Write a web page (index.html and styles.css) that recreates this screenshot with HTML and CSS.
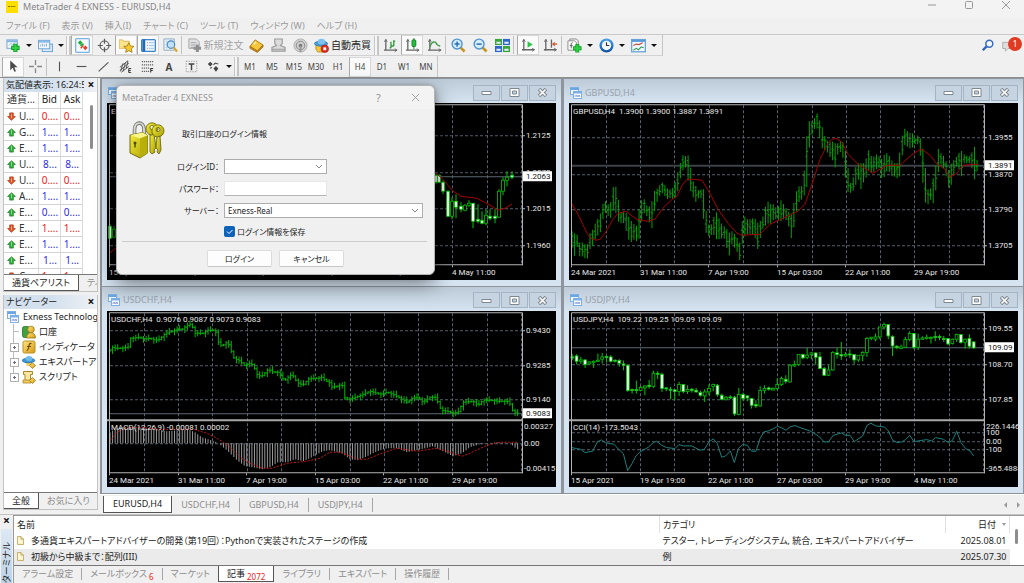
FILE: index.html
```html
<!DOCTYPE html>
<html lang="ja">
<head>
<meta charset="utf-8">
<title>MetaTrader 4 EXNESS - EURUSD,H4</title>
<link rel="stylesheet" href="styles.css">
</head>
<body>
<svg class="defs" aria-hidden="true">
  <defs>
    <linearGradient id="gold" x1="0" y1="0" x2="1" y2="1"><stop offset="0" stop-color="#ffe680"/><stop offset="1" stop-color="#d79a12"/></linearGradient>
    <linearGradient id="blue" x1="0" y1="0" x2="0" y2="1"><stop offset="0" stop-color="#4ba3ea"/><stop offset="1" stop-color="#0c4f9c"/></linearGradient>
    <linearGradient id="lock" x1="0" y1="0" x2="1" y2="1"><stop offset="0" stop-color="#f6ee3a"/><stop offset="1" stop-color="#a79d06"/></linearGradient>
    <symbol id="i-newchart" viewBox="0 0 16 16"><rect x="1" y="2" width="11" height="9" fill="#f4faff" stroke="#6fa3d0"/><path d="M1 3.500h11" stroke="#7fb2dd" stroke-width="2"/><path d="M3 8l2-2 2 1 3-2" fill="none" stroke="#8fb4cc"/><path d="M10 6v9M5.500 10.500h9" stroke="#0f9a24" stroke-width="4.400"/><path d="M10 6.700v7.600M6.200 10.500h7.600" stroke="#2fd045" stroke-width="2.600"/></symbol>
    <symbol id="i-profiles" viewBox="0 0 16 16"><rect x="4.500" y="6.500" width="11" height="8" fill="#dbeafa" stroke="#6a9fd6"/><rect x=".5" y="2.500" width="12" height="9" fill="#f0f7ff" stroke="#6a9fd6"/><path d="M1 4h11" stroke="#8bbbe8" stroke-width="2"/><path d="M3 9V7M5 9V6M7 9V7M9 9V6" stroke="#8aa9c6"/></symbol>
    <symbol id="i-watch" viewBox="0 0 16 16"><rect x=".7" y=".7" width="14.600" height="14.600" rx="1" fill="#f5faff" stroke="#7db3e4" stroke-width="1.400"/><path d="M3 5l2.500-2.500L8 5 5.500 7.500z" fill="#25a93a"/><path d="M8.500 10.500L11 8l2.500 2.500L11 13z" fill="#e0442a"/><path d="M6 8.500l3-2.500" stroke="#25a93a" stroke-width="2"/><path d="M6 11l3-3" stroke="#e0442a" stroke-width="1.500"/></symbol>
    <symbol id="i-target" viewBox="0 0 16 16"><circle cx="8" cy="8" r="4.800" fill="none" stroke="#5b5b5b" stroke-width="1.300"/><path d="M8 .8v5.400M8 9.800v5.400M.8 8h5.400M9.800 8h5.400" stroke="#5b5b5b" stroke-width="1.300"/></symbol>
    <symbol id="i-star" viewBox="0 0 16 16"><path d="M0 2h4l1 1.500h6V11H0z" fill="#fbe38b" stroke="#d2a93a" stroke-width=".8"/><path d="M10.500 5l1.700 3.500 3.700.5-2.700 2.600.7 3.700-3.400-1.800-3.300 1.800.6-3.700L5 9l3.800-.5z" fill="#f8c92e" stroke="#9c7b17" stroke-width=".9"/></symbol>
    <symbol id="i-nav" viewBox="0 0 16 16"><rect x=".7" y="1.700" width="14.600" height="12.600" rx="1" fill="#eef6fe" stroke="#3f84c6" stroke-width="1.400"/><path d="M3 1.500v13" stroke="#1e6bb8" stroke-width="3"/><path d="M6.500 5h.8M6.500 8h.8M6.500 11h.8" stroke="#e05a4a"/><path d="M8.500 5H14M8.500 8H14M8.500 11H14" stroke="#9cc3e8"/></symbol>
    <symbol id="i-tester" viewBox="0 0 16 16"><path d="M1 1h11v12H1z" fill="#f2f7fc" stroke="#8aa6c0"/><path d="M2 4h9M2 7h9M2 10h9M4 1v12M7 1v12" stroke="#c4d5e6"/><circle cx="8.500" cy="7" r="4" fill="#bfe0f8" stroke="#4a88c0" stroke-width="1.200"/><path d="M11.500 10l3.500 4.500" stroke="#d9a520" stroke-width="2.400"/></symbol>
    <symbol id="i-order" viewBox="0 0 16 16"><path d="M2 1h8l3 3v7H2z" fill="#e2e2e2" stroke="#a3a3a3"/><path d="M4 5h6M4 7.500h5M4 10h3" stroke="#a0a0a0"/><path d="M11 7v8M7 11h8" stroke="#8e8e8e" stroke-width="3.200"/></symbol>
    <symbol id="i-book" viewBox="0 0 16 16"><path d="M1 9l5.500-7L15 7.500 9 14z" fill="#f3c63c" stroke="#a87b13"/><path d="M1 9v2l8 4.500 6-6V7.500L9 14z" fill="#d08c1a" stroke="#93630f" stroke-width=".7"/><path d="M5 7l2.500-3" stroke="#fff0b0" stroke-width="1.500"/></symbol>
    <symbol id="i-stamp" viewBox="0 0 16 16"><path d="M4 1h8v5l-2 2 5 2v4H1v-4l5-2-2-2z" fill="#dcdcdc" stroke="#9a9a9a" stroke-width="1.200"/><path d="M1 12h14" stroke="#9a9a9a"/></symbol>
    <symbol id="i-signal" viewBox="0 0 16 16"><circle cx="8" cy="8" r="7" fill="#d0d0d0" stroke="#b0b0b0"/><circle cx="8" cy="8" r="4.500" fill="none" stroke="#8a8a8a"/><circle cx="8" cy="8" r="2" fill="#777"/><path d="M8 8v7" stroke="#999" stroke-width="2"/></symbol>
    <symbol id="i-expert" viewBox="0 0 16 16"><path d="M2 8h9l2 4-3 3H4l-2-3z" fill="#f1c63b" stroke="#b3861c" stroke-width=".8"/><ellipse cx="7.500" cy="6" rx="7" ry="2.700" fill="#4a9fd8" stroke="#2b74a8" stroke-width=".8"/><ellipse cx="8" cy="3.800" rx="4" ry="3" fill="#7cc2ec"/><circle cx="11.500" cy="11.500" r="4" fill="#e02a1e" stroke="#a8150e" stroke-width=".7"/><rect x="10" y="10" width="3" height="3" fill="#fff"/></symbol>
    <symbol id="i-bars" viewBox="0 0 16 16"><path d="M3 1.500v12M1 13h14" stroke="#666" stroke-width="1.400"/><path d="M1.500 4L3 1.500 4.500 4M12.500 11.500L15 13l-2.500 1.500" fill="none" stroke="#666"/><path d="M8.500 4v7M7 10.500h1.500M11.500 2.500v6M11.500 3.500H13M8.500 8.500h3" stroke="#2b9a3a" stroke-width="1.400"/></symbol>
    <symbol id="i-candle" viewBox="0 0 16 16"><path d="M3 1.500v12M1 13h14" stroke="#666" stroke-width="1.400"/><path d="M1.500 4L3 1.500 4.500 4M12.500 11.500L15 13l-2.500 1.500" fill="none" stroke="#666"/><path d="M9.500 0v12" stroke="#14882a"/><rect x="7.500" y="2" width="4" height="7" rx="1" fill="#22c23c" stroke="#0d7a20"/></symbol>
    <symbol id="i-line" viewBox="0 0 16 16"><path d="M3 1.500v12M1 13h14" stroke="#666" stroke-width="1.400"/><path d="M1.500 4L3 1.500 4.500 4M12.500 11.500L15 13l-2.500 1.500" fill="none" stroke="#666"/><path d="M3 10c2-7 6-7 7-4 1 2 3 2 4 3" fill="none" stroke="#3fa04c" stroke-width="1.500"/></symbol>
    <symbol id="i-zoomin" viewBox="0 0 16 16"><path d="M10 10l4.500 4.500" stroke="#c9951d" stroke-width="3"/><circle cx="6.500" cy="6.500" r="5.300" fill="#d5ecfb" stroke="#4f95cf" stroke-width="1.500"/><path d="M6.500 3.800v5.400M3.800 6.500h5.400" stroke="#2a6fb0" stroke-width="1.600"/></symbol>
    <symbol id="i-zoomout" viewBox="0 0 16 16"><path d="M10 10l4.500 4.500" stroke="#c9951d" stroke-width="3"/><circle cx="6.500" cy="6.500" r="5.300" fill="#d5ecfb" stroke="#4f95cf" stroke-width="1.500"/><path d="M3.800 6.500h5.400" stroke="#2a6fb0" stroke-width="1.600"/></symbol>
    <symbol id="i-tile" viewBox="0 0 16 16"><rect x="0" y="1" width="7.500" height="6.500" fill="#39a53c"/><rect x="8.500" y="1" width="7.500" height="6.500" fill="#2f66c8"/><rect x="0" y="8.500" width="7.500" height="6.500" fill="#2f66c8"/><rect x="8.500" y="8.500" width="7.500" height="6.500" fill="#39a53c"/><path d="M1.500 4h4.500v2H1.500zM10 4h4.500v2H10zM1.500 11.500h4.500v2H1.500zM10 11.500h4.500v2H10z" fill="#e6f1fb"/></symbol>
    <symbol id="i-scroll" viewBox="0 0 16 16"><path d="M3 1.500v12M1 12.500h13" stroke="#666" stroke-width="1.400"/><path d="M1.500 4L3 1.500 4.500 4M12 11l2.500 1.500L12 14" fill="none" stroke="#666"/><path d="M7 3.500l5.500 3.500L7 10.500z" fill="#2fc14a"/></symbol>
    <symbol id="i-shift" viewBox="0 0 16 16"><path d="M3 1.500v12M1 12.500h13M9 1.500v9" stroke="#666" stroke-width="1.400"/><path d="M1.500 4L3 1.500 4.500 4M12 11l2.500 1.500L12 14" fill="none" stroke="#666"/><path d="M9.500 6.500l3-2.500v5z" fill="#d4552d"/><path d="M12 6.500h3" stroke="#d4552d" stroke-width="1.500"/></symbol>
    <symbol id="i-addind" viewBox="0 0 16 16"><path d="M3 3V1h7l2 2v9" fill="#f0f0f0" stroke="#8a8a8a"/><path d="M1 3h7l2 2v8H1z" fill="#fff" stroke="#8a8a8a"/><path d="M6 5C4 5 4.500 7 4.500 8v3M3 8h3" fill="none" stroke="#555"/><path d="M11 6.500v9M6.500 11h9" stroke="#0f9a24" stroke-width="4.200"/><path d="M11 7.200v7.600M7.200 11h7.600" stroke="#2fd045" stroke-width="2.400"/></symbol>
    <symbol id="i-clock" viewBox="0 0 16 16"><circle cx="8" cy="8" r="7.500" fill="url(#blue)"/><circle cx="8" cy="8" r="5" fill="#f3f9ff"/><path d="M8 4.500V8h3" fill="none" stroke="#333" stroke-width="1.200"/></symbol>
    <symbol id="i-template" viewBox="0 0 16 16"><rect x=".7" y="1.700" width="14.600" height="13" fill="#f2f8fe" stroke="#6aa5da" stroke-width="1.400"/><path d="M1 3h14" stroke="#5a9bd6" stroke-width="2.400"/><path d="M2.500 8l3-1.500 3 .5 4-2" fill="none" stroke="#c44a3c" stroke-width="1.200"/><path d="M2.500 13l3-2 2.500 1.500 3-3 2.500 1" fill="none" stroke="#3a9a5a" stroke-width="1.200"/></symbol>
    <symbol id="i-arrow" viewBox="0 0 16 16"><path d="M4 .5v12l3-3 2 5 2-.8-2-4.700h4z" fill="#4a4a4a"/></symbol>
    <symbol id="i-cross" viewBox="0 0 16 16"><path d="M8 0v6M8 10v6M0 8h6M10 8h6" stroke="#888" stroke-width="1.600"/></symbol>
    <symbol id="i-vline" viewBox="0 0 16 16"><path d="M8 2v12" stroke="#555" stroke-width="1.400"/></symbol>
    <symbol id="i-hline" viewBox="0 0 16 16"><path d="M2 8h12" stroke="#555" stroke-width="1.400"/></symbol>
    <symbol id="i-trend" viewBox="0 0 16 16"><path d="M2 14L14 3" stroke="#555" stroke-width="1.400"/></symbol>
    <symbol id="i-channel" viewBox="0 0 16 16"><path d="M1 9L11 1M1 13L12 4M3 15l9-7M5 4l-3 10M8 3L5 14M11 1L9 10" stroke="#555" stroke-width="1.200"/><path d="M15 10.500h-3v5h3M12 13h2.500" fill="none" stroke="#333" stroke-width="1.200"/></symbol>
    <symbol id="i-fibo" viewBox="0 0 16 16"><path d="M1 2h14M1 6h14M1 10h9M1 14h9" stroke="#666" stroke-width="1.300" stroke-dasharray="1.500 1"/><path d="M12 15.500v-5h3M12 13h2.500" fill="none" stroke="#333" stroke-width="1.300"/></symbol>
    <symbol id="i-label" viewBox="0 0 16 16"><rect x="1.500" y="1.500" width="13" height="13" fill="none" stroke="#888" stroke-dasharray="1.500 1.500"/><path d="M4.500 5h7M8 5v7.500" stroke="#444" stroke-width="1.800"/></symbol>
    <symbol id="i-marks" viewBox="0 0 16 16"><path d="M1 5l3-3 3 3-3 3zM8 10.500l3-3 3 3-3 4z" fill="#444"/><path d="M6 9l-2 1.500M8 6l2-2 4 1" stroke="#555" stroke-width="1.400" fill="none"/></symbol>
    <symbol id="i-chartwin" viewBox="0 0 12 12"><rect x=".5" y=".5" width="8" height="7" fill="#eef6ff" stroke="#7db0e4"/><path d="M.5 2h8" stroke="#6ba6e0" stroke-width="2"/><rect x="3.500" y="4.500" width="8" height="7" fill="#f8fbff" stroke="#7db0e4"/><path d="M3.500 5.500h8" stroke="#7db0e4" stroke-width="2"/><path d="M5 10V8.500l1.500 1V8l1.500 2V8l1.500 2V8" fill="none" stroke="#8b9dd8" stroke-width=".8"/></symbol>
    <symbol id="i-up" viewBox="0 0 10 10"><path d="M5 .7L9.300 5H7v4H3V5H.7z" fill="#2fae3a" stroke="#1b7d28" stroke-width=".8"/><path d="M5 2v5" stroke="#8be08f"/></symbol>
    <symbol id="i-down" viewBox="0 0 10 10"><path d="M5 9.300L.7 5H3V1h4v4h2.300z" fill="#e0572d" stroke="#a83414" stroke-width=".8"/><path d="M5 2.500v4" stroke="#ffb08c"/></symbol>
    <symbol id="i-doc" viewBox="0 0 8 10"><path d="M.5.5h4l3 3v6h-7z" fill="#fff6d2" stroke="#b59a4c" stroke-width=".9"/><path d="M4.500.5v3h3" fill="none" stroke="#b59a4c" stroke-width=".9"/></symbol>
    <symbol id="i-account" viewBox="0 0 14 14"><rect x=".5" y="1.500" width="7" height="11" rx="2" fill="#3fa13f" stroke="#1f6f24" stroke-width=".8"/><circle cx="9" cy="4.500" r="3.300" fill="url(#gold)" stroke="#9b7412" stroke-width=".8"/><path d="M4.500 13c0-7 9-7 9 0z" fill="url(#gold)" stroke="#9b7412" stroke-width=".8"/></symbol>
    <symbol id="i-func" viewBox="0 0 14 14"><rect x="1" y="1" width="12" height="12" rx="1.500" fill="url(#gold)" stroke="#b98f2a"/><path d="M9.500 3.500C7 2.500 7 6 6.500 8s-.7 3-2 2.700M5 6.500h4" fill="none" stroke="#6d4c0b" stroke-width="1.100"/></symbol>
    <symbol id="i-hat" viewBox="0 0 14 14"><path d="M3 6h7v5H5z" fill="#f2cf62"/><ellipse cx="6.500" cy="5.500" rx="6.300" ry="2.300" fill="#3f97d2" stroke="#2368a0" stroke-width=".7"/><ellipse cx="7" cy="3.500" rx="3.400" ry="2.600" fill="#6db9e8"/><path d="M10.500 8l3 2.500-3 3-3-3z" fill="url(#gold)" stroke="#93700f" stroke-width=".7"/></symbol>
    <symbol id="i-script" viewBox="0 0 14 14"><path d="M1.500 1.500h9v3h-2v6H3v-6H1.500z" fill="#fbe7a0" stroke="#a9852a"/><path d="M1 10h8v3H1z" fill="#f0cc5c" stroke="#a9852a" stroke-width=".8"/><path d="M10.500 7.500l3 3-3 3-3-3z" fill="url(#gold)" stroke="#93700f" stroke-width=".7"/></symbol>
  </defs>
</svg>

<header class="titlebar">
  <svg class="logo" viewBox="0 0 12 12"><path fill="#ffde02" d="M0 0h12v12H0z"/><path stroke="#8a7700" d="M2 5.500h8" stroke-dasharray="2 .6"/></svg>
  <h1 class="titlebar-text">MetaTrader 4 EXNESS - EURUSD,H4</h1>
  <div class="sysbuttons">
    <button aria-label="最小化"><svg viewBox="0 0 10 10"><path d="M1 5h8"/></svg></button>
    <button aria-label="最大化"><svg viewBox="0 0 10 10"><rect x="1.500" y="1.500" width="7" height="7" rx="1"/></svg></button>
    <button aria-label="閉じる"><svg viewBox="0 0 10 10"><path d="M1 1l8 8M9 1L1 9"/></svg></button>
  </div>
</header>

<nav class="menubar">
  <button>ファイル (F)</button><button>表示 (V)</button><button>挿入(I)</button><button>チャート (C)</button><button>ツール (T)</button><button>ウィンドウ (W)</button><button>ヘルプ (H)</button>
</nav>

<div class="toolrow">
  <div class="toolbar">
    <button class="tool" aria-label="新規チャート"><svg><use href="#i-newchart"/></svg></button><button class="caret" aria-label="メニュー"></button>
    <button class="tool" aria-label="組表示"><svg><use href="#i-profiles"/></svg></button><button class="caret" aria-label="メニュー"></button>
    <span class="grip"></span>
    <button class="tool on" aria-label="気配値表示"><svg><use href="#i-watch"/></svg></button>
    <button class="tool" aria-label="データウィンドウ"><svg><use href="#i-target"/></svg></button>
    <button class="tool on" aria-label="ナビゲーター"><svg><use href="#i-star"/></svg></button>
    <button class="tool on" aria-label="ターミナル"><svg><use href="#i-nav"/></svg></button>
    <button class="tool" aria-label="テスター"><svg><use href="#i-tester"/></svg></button>
    <span class="sep"></span>
    <button class="tool wide off"><svg><use href="#i-order"/></svg>新規注文</button>
    <button class="tool" aria-label="MetaEditor"><svg><use href="#i-book"/></svg></button>
    <button class="tool" aria-label="印刷"><svg><use href="#i-stamp"/></svg></button>
    <button class="tool" aria-label="シグナル"><svg><use href="#i-signal"/></svg></button>
    <button class="tool wide"><svg><use href="#i-expert"/></svg>自動売買</button>
    <span class="grip"></span>
    <button class="tool" aria-label="バーチャート"><svg><use href="#i-bars"/></svg></button>
    <button class="tool on" aria-label="ローソク足"><svg><use href="#i-candle"/></svg></button>
    <button class="tool" aria-label="ラインチャート"><svg><use href="#i-line"/></svg></button>
    <span class="sep thin"></span>
    <button class="tool" aria-label="拡大"><svg><use href="#i-zoomin"/></svg></button>
    <button class="tool" aria-label="縮小"><svg><use href="#i-zoomout"/></svg></button>
    <button class="tool" aria-label="整列"><svg><use href="#i-tile"/></svg></button>
    <span class="sep"></span>
    <button class="tool on" aria-label="自動スクロール"><svg><use href="#i-scroll"/></svg></button>
    <button class="tool" aria-label="シフト"><svg><use href="#i-shift"/></svg></button>
    <span class="sep thin"></span>
    <button class="tool" aria-label="インディケータ"><svg><use href="#i-addind"/></svg></button><button class="caret" aria-label="メニュー"></button>
    <button class="tool" aria-label="時間足"><svg><use href="#i-clock"/></svg></button><button class="caret" aria-label="メニュー"></button>
    <button class="tool" aria-label="定型チャート"><svg><use href="#i-template"/></svg></button><button class="caret" aria-label="メニュー"></button>
  </div>
  <div class="toolrow-right">
    <button class="tool" aria-label="検索"><svg viewBox="0 0 16 16"><path d="M7 9l-5 5" stroke="#2f62b8" stroke-width="2.600"/><circle cx="9.500" cy="6.500" r="4" fill="#f4f8ff" stroke="#3a6cc0" stroke-width="1.700"/></svg></button>
    <button class="tool notify" aria-label="通知"><svg viewBox="0 0 16 16"><path d="M2 5h11v7H8l-3 3v-3H2z" fill="#dedede" stroke="#a8a8a8"/></svg><span class="badge">1</span></button>
  </div>
</div>

<div class="toolrow second">
  <div class="toolbar">
    <button class="tool on" aria-label="カーソル"><svg><use href="#i-arrow"/></svg></button>
    <button class="tool" aria-label="十字カーソル"><svg><use href="#i-cross"/></svg></button>
    <span class="sep thin"></span>
    <button class="tool" aria-label="垂直線"><svg><use href="#i-vline"/></svg></button>
    <button class="tool" aria-label="水平線"><svg><use href="#i-hline"/></svg></button>
    <button class="tool" aria-label="トレンドライン"><svg><use href="#i-trend"/></svg></button>
    <button class="tool" aria-label="チャネル"><svg><use href="#i-channel"/></svg></button>
    <button class="tool" aria-label="フィボナッチ"><svg><use href="#i-fibo"/></svg></button>
    <button class="tool letter">A</button>
    <button class="tool" aria-label="ラベル"><svg><use href="#i-label"/></svg></button>
    <button class="tool" aria-label="矢印"><svg><use href="#i-marks"/></svg></button><button class="caret" aria-label="メニュー"></button>
    <span class="grip"></span>
    <button class="tool tf">M1</button><button class="tool tf">M5</button><button class="tool tf">M15</button><button class="tool tf">M30</button><button class="tool tf">H1</button><button class="tool tf on">H4</button><button class="tool tf">D1</button><button class="tool tf">W1</button><button class="tool tf">MN</button>
  </div>
</div>

<main class="workspace">
  <aside class="side">
    <section class="panel watch">
      <header class="panel-head"><h2>気配値表示: 16:24:57</h2><button aria-label="閉じる">×</button></header>
      <div class="panel-body watch-body">
        <table class="quotes">
          <thead><tr><th class="sym">通貨...</th><th>Bid</th><th>Ask</th></tr></thead>
          <tbody>
            <tr class="down"><td><svg><use href="#i-down"/></svg>U...</td><td>0....</td><td>0....</td></tr>
            <tr><td><svg><use href="#i-up"/></svg>G...</td><td>1....</td><td>1....</td></tr>
            <tr><td><svg><use href="#i-up"/></svg>E...</td><td>1....</td><td>1....</td></tr>
            <tr><td><svg><use href="#i-up"/></svg>U...</td><td>8...</td><td>8...</td></tr>
            <tr class="down"><td><svg><use href="#i-down"/></svg>U...</td><td>0....</td><td>0....</td></tr>
            <tr><td><svg><use href="#i-up"/></svg>A...</td><td>1....</td><td>1....</td></tr>
            <tr><td><svg><use href="#i-up"/></svg>E...</td><td>0....</td><td>0....</td></tr>
            <tr class="down"><td><svg><use href="#i-down"/></svg>E...</td><td>1....</td><td>1....</td></tr>
            <tr><td><svg><use href="#i-up"/></svg>E...</td><td>1....</td><td>1....</td></tr>
            <tr><td><svg><use href="#i-up"/></svg>E...</td><td>1...</td><td>1...</td></tr>
            <tr class="down"><td><svg><use href="#i-down"/></svg>C...</td><td>1....</td><td>1....</td></tr>
          </tbody>
        </table>
        <div class="scroll"><span></span></div>
      </div>
      <div class="tabs"><button class="tab active">通貨ペアリスト</button><button class="tab">ティックチャート</button></div>
    </section>
    <section class="panel nav">
      <header class="panel-head"><h2>ナビゲーター</h2><button aria-label="閉じる">×</button></header>
      <ul class="panel-body tree">
        <li class="root"><svg><use href="#i-chartwin"/></svg>Exness Technologies</li>
        <li><i class="branch"></i><svg><use href="#i-account"/></svg>口座</li>
        <li><i class="branch plus"></i><svg><use href="#i-func"/></svg>インディケータ</li>
        <li><i class="branch plus"></i><svg><use href="#i-hat"/></svg>エキスパートアドバイザ</li>
        <li><i class="branch plus last"></i><svg><use href="#i-script"/></svg>スクリプト</li>
      </ul>
      <div class="tabs"><button class="tab active">全般</button><button class="tab">お気に入り</button></div>
    </section>
  </aside>

  <div class="mdi">
    <div class="windows">
      <section class="win">
        <header class="win-head"><svg class="win-icon"><use href="#i-chartwin"/></svg><h2>EURUSD,H4</h2><div class="win-buttons"></div></header>
        <svg class="chart" data-chart="eurusd" viewBox="0 0 449 176"></svg>
      </section>
      <section class="win">
        <header class="win-head"><svg class="win-icon"><use href="#i-chartwin"/></svg><h2>GBPUSD,H4</h2><div class="win-buttons"></div></header>
        <svg class="chart" data-chart="gbpusd" viewBox="0 0 449 176"></svg>
      </section>
      <section class="win">
        <header class="win-head"><svg class="win-icon"><use href="#i-chartwin"/></svg><h2>USDCHF,H4</h2><div class="win-buttons"></div></header>
        <svg class="chart" data-chart="usdchf" viewBox="0 0 449 176"></svg>
      </section>
      <section class="win">
        <header class="win-head"><svg class="win-icon"><use href="#i-chartwin"/></svg><h2>USDJPY,H4</h2><div class="win-buttons"></div></header>
        <svg class="chart" data-chart="usdjpy" viewBox="0 0 449 176"></svg>
      </section>
    </div>
    <div class="chart-tabs">
      <button class="active">EURUSD,H4</button><button>USDCHF,H4</button><button>GBPUSD,H4</button><button>USDJPY,H4</button>
      <div class="chart-arrows"><button class="prev" aria-label="前へ"></button><button class="next" aria-label="次へ"></button></div>
    </div>
  </div>
</main>

<section class="terminal">
  <div class="term-side"><button aria-label="閉じる">×</button><h2>ターミナル</h2></div>
  <div class="term-main">
    <div class="term-body">
      <table class="articles">
        <thead><tr><th>名前</th><th class="cat">カテゴリ</th><th class="date">日付<span class="sort"></span></th></tr></thead>
        <tbody>
          <tr><td><svg><use href="#i-doc"/></svg>多通貨エキスパートアドバイザーの開発（第19回）：Pythonで実装されたステージの作成</td><td>テスター, トレーディングシステム, 統合, エキスパートアドバイザー</td><td class="date">2025.08.01</td></tr>
          <tr class="alt"><td><svg><use href="#i-doc"/></svg>初級から中級まで：配列(III)</td><td>例</td><td class="date">2025.07.30</td></tr>
        </tbody>
      </table>
      <div class="term-scroll"><span></span></div>
    </div>
    <div class="term-tabs">
      <button>アラーム設定</button><button>メールボックス<sub>6</sub></button><button class="last">マーケット</button><button class="active">記事<sub>2072</sub></button><button>ライブラリ</button><button>エキスパート</button><button>操作履歴</button>
    </div>
  </div>
</section>

<form class="dialog" role="dialog" aria-labelledby="dlg-title">
  <header class="dialog-head"><h2 id="dlg-title">MetaTrader 4 EXNESS</h2><button type="button" aria-label="ヘルプ">?</button><button type="button" aria-label="閉じる"><svg viewBox="0 0 10 10"><path d="M1 1l8 8M9 1L1 9"/></svg></button></header>
  <div class="dialog-body">
    <svg class="keys" viewBox="0 0 36 38" aria-hidden="true">
      <g fill="url(#lock)" stroke="#6f6a10" stroke-width=".9">
        <path d="M21 14l4-1 2 14-2 2 1 2-3 2-2-2z"/>
        <path fill-rule="evenodd" d="M17 7a6 6 0 1 1 9 6l-4 1a6 6 0 0 1-5-7zm4 0a2 2 0 1 0 4-1 2 2 0 0 0-4 1z"/>
        <path d="M28 15l3 0 1 14-2 4-2-2 1-2-2-2z"/>
        <path fill-rule="evenodd" d="M23 9a6 6 0 1 1 9 6l-4 1a6 6 0 0 1-5-7zm4 0a2 2 0 1 0 4-1 2 2 0 0 0-4 1z"/>
      </g>
      <path d="M5.500 15V9c0-9 9-9 9.500-1v7" fill="none" stroke="#6e6e66" stroke-width="3.600"/>
      <path d="M5.500 15V9c0-9 9-9 9.500-1v7" fill="none" stroke="#d8d8d2" stroke-width="1.900"/>
      <path d="M1 14l13-2.500 4.500 3V32L11 37 1 32z" fill="url(#lock)" stroke="#6f6a10"/>
      <path d="M1 14l10 3.500L18.500 14.500 14 11.500z" fill="#f9f58a"/>
      <path d="M11 17.500V37l7.500-5V14.500z" fill="#b9af0c"/>
      <path d="M2.500 20l7 2M2.500 29l7 3" stroke="#d3ca22"/>
      <circle cx="6" cy="22" r="1.500" fill="#4d4906"/><path d="M6 22v4.500" stroke="#4d4906" stroke-width="1.400"/>
    </svg>
    <p class="lead">取引口座のログイン情報</p>
    <label for="login">ログインID：</label>
    <select id="login" class="field"><option></option></select>
    <label for="password">パスワード：</label>
    <input id="password" class="field" type="password">
    <label for="server">サーバー：</label>
    <select id="server" class="field long"><option>Exness-Real</option></select>
    <div class="save"><input id="save" type="checkbox" checked><label for="save">ログイン情報を保存</label></div>
  </div>
  <footer class="dialog-foot"><button type="button">ログイン</button><button type="button">キャンセル</button></footer>
</form>
<script src="charts.js"></script>
</body>
</html>
```

FILE: styles.css
```css
* { box-sizing: border-box; }
body {
  margin: 0;
  height: 100vh;
  display: flex;
  flex-direction: column;
  overflow: hidden;
  background: #f0f0f0;
  color: #222;
  font: 9px/14px "Noto Sans", "Noto Sans CJK JP", sans-serif;
  font-feature-settings: "palt";
  white-space: nowrap;
}
h1, h2, p, ul { margin: 0; padding: 0; font: inherit; list-style: none; }
button { margin: 0; padding: 0; border: 0; background: none; color: inherit; font: inherit; font-feature-settings: inherit; white-space: nowrap; }
.defs { position: absolute; width: 0; height: 0; }

.titlebar { display: flex; align-items: center; gap: 5px; height: 18px; padding: 0 0 5px 6px; background: #f3f3f3; color: #858585; }
.logo { width: 12px; height: 12px; }
.sysbuttons { margin-left: auto; display: flex; }
.sysbuttons button { width: 37px; height: 14px; }
.sysbuttons svg { width: 10px; height: 10px; fill: none; stroke: #999; }

.menubar { display: flex; gap: 12px; height: 17px; padding: 1px 6px; color: #9a9a9a; border-bottom: 1px solid #c9c9c9; }

.toolrow { display: flex; justify-content: space-between; height: 21px; background: #f0f0f0; }
.toolbar { display: flex; align-items: center; padding: 0 3px 0 2px; border-right: 1px solid #c6c6c6; border-bottom: 1px solid #d2d2d2; }
.toolrow.second { height: 22px; border-bottom: 1px solid #8f8f8f; }
.second .toolbar { padding: 0 0 0 2px; border-bottom: 0; }
.tool { display: flex; align-items: center; justify-content: center; width: 22px; height: 20px; }
.tool svg { width: 15px; height: 15px; flex: none; }
.second .tool svg { width: 13px; height: 13px; }
.tool.on { background: #fafafa; border: 1px solid #d8d8d8; border-left-color: #aaa; }
.tool.wide { width: 63px; gap: 2px; font-size: 10px; }
.tool.off { width: 60px; color: #a4a4a4; }
.tool.tf { font-size: 8px; color: #444; }
.tool.letter { font-size: 10px; font-weight: 700; color: #444; }
.caret { width: 10px; height: 20px; display: flex; align-items: center; justify-content: center; }
.caret::before { content: ""; border: 3px solid transparent; border-top-color: #111; border-bottom: 0; }
.grip { width: 5px; height: 19px; border: solid #c6c6c6; border-width: 0 2px 0 1px; background: #f6f6f6; }
.sep { width: 4px; height: 18px; border-left: 1px solid #c2c2c2; }
.sep.thin { width: 2px; }
.toolrow-right { display: flex; gap: 2px; padding-right: 1px; }
.toolrow-right .tool svg { width: 14px; height: 14px; }
.toolrow-right .notify { position: relative; justify-content: flex-start; }
.badge { position: absolute; right: 1px; top: 2px; width: 14px; height: 14px; border-radius: 50%; background: #e03a22; color: #fff; line-height: 14px; text-align: center; }

.workspace { flex: 1; display: flex; min-height: 0; }
.side { width: 100px; display: flex; flex-direction: column; padding: 0 2px 4px 3px; gap: 3px; }
.panel { display: flex; flex-direction: column; min-height: 0; border: 1px solid #c2c2c2; border-top: 0; }
.watch { flex: 0 0 214px; }
.nav { flex: 1; }
.panel-head { display: flex; justify-content: space-between; height: 14px; padding-right: 2px; background: linear-gradient(90deg, #d3e0ee 50%, #eef1f5); line-height: 13px; }
.panel-head h2 { width: 80px; padding-left: 2px; overflow: hidden; }
.panel-head button, .term-side button { width: 8px; font-weight: 700; font-size: 12px; line-height: 12px; color: #111; }
.panel-body { flex: 1; min-height: 0; background: #fff; overflow: hidden; }
.watch-body { display: flex; justify-content: space-between; }
.quotes { border-collapse: collapse; table-layout: fixed; width: 79px; height: 0; font-size: 10px; }
.quotes th, .quotes td { height: 16px; padding: 0 3px; border-right: 1px solid #dadada; border-bottom: 1px solid #d2d2d2; line-height: 15px; font-weight: 400; text-align: right; overflow: hidden; }
.quotes th { width: 22px; }
.quotes .sym { width: 34px; }
.quotes th.sym, .quotes td:first-child, .quotes .down td:first-child { text-align: left; color: #333; }
.quotes td { color: #2a2af0; }
.quotes .down td { color: #f02020; }
.quotes svg { width: 9px; height: 9px; margin-right: 3px; vertical-align: -1px; }
.scroll { width: 10px; padding: 13px 3px; }
.scroll span { display: block; width: 3px; height: 44px; border-radius: 2px; background: #8d8d8d; }
.tabs { display: flex; height: 17px; overflow: hidden; background: #f0f0f0; border-top: 1px solid #777; }
.tab { padding: 0 8px; color: #8d8d8d; height: 16px; }
.tab.active { background: #fff; color: #222; border-right: 1px solid #555; border-bottom: 1px solid #555; }
.tree li { display: flex; align-items: center; height: 15px; padding-left: 4px; gap: 3px; }
.tree .root { padding-left: 3px; gap: 4px; }
.tree svg { width: 14px; height: 14px; flex: none; }
.tree .root svg { width: 12px; height: 12px; }
.branch { position: relative; width: 11px; height: 15px; flex: none; background: linear-gradient(#bbb, #bbb) 5px 7px / 8px 1px no-repeat, linear-gradient(#bbb, #bbb) 5px 0 / 1px 15px no-repeat; }
.branch.last { background-size: 8px 1px, 1px 8px; }
.branch.plus::before { content: ""; position: absolute; left: 2px; top: 4px; width: 7px; height: 7px; border: 1px solid #b0b0b0; background: linear-gradient(#668, #668) center / 3px 1px no-repeat, linear-gradient(#668, #668) center / 1px 3px no-repeat, #fff; }

.mdi { flex: 1; min-width: 0; display: flex; flex-direction: column; }
.windows { flex: 1; min-height: 0; display: grid; grid-template-columns: 1fr 1fr; grid-template-rows: 1fr 1fr; border-bottom: 1px solid #8c9197; }
.win { display: flex; flex-direction: column; min-height: 0; min-width: 0; padding: 0 5px 6px 5px; border: 1px solid #8e959c; border-width: 1px 1px 0 2px; background: linear-gradient(#bdcbd8, #d6e4f2 24px); }
.win-head { display: flex; align-items: center; gap: 3px; height: 24px; padding: 3px 0 0 1px; color: #98a1a9; }
.win-icon { width: 12px; height: 12px; }
.win-buttons { margin-left: auto; display: flex; gap: 1px; }
.win-buttons button { display: flex; align-items: center; justify-content: center; width: 27px; height: 16px; border: 1px solid #a4b4c5; background: #c6d4e2; }
.win-buttons svg { width: 11px; height: 9px; }
.chart { display: block; flex: 1; min-height: 0; width: 100%; background: #000; font: 8px Roboto, "Noto Sans", sans-serif; }
.chart .label { fill: #e6e6e6; }
.chart .tag { fill: #111; }
.chart-tabs { display: flex; align-items: center; height: 20px; padding-left: 3px; background: #f0f0f0; color: #8d8d8d; border-top: 1px solid #fff; }
.chart-tabs > button { height: 14px; padding: 0 9px; border-right: 1px solid #a5a5a5; }
.chart-tabs > .active { height: 17px; background: #fff; color: #222; border: 1px solid #555; border-top: 0; }
.chart-arrows { margin-left: auto; display: flex; gap: 10px; padding-right: 4px; }
.chart-arrows button { border: 3px solid transparent; }
.chart-arrows .prev { border-right-color: #999; border-left: 0; }
.chart-arrows .next { border-left-color: #999; border-right: 0; }

.terminal { display: flex; height: 69px; border-top: 1px solid #c4c4c4; }
.term-side { display: flex; flex-direction: column; align-items: center; gap: 2px; width: 13px; }
.term-side h2 { flex: 1; width: 11px; writing-mode: vertical-rl; text-orientation: sideways; transform: rotate(180deg); background: linear-gradient(#bcd3e8, #dde8f3); line-height: 11px; }
.term-main { flex: 1; min-width: 0; display: flex; flex-direction: column; border-top: 1px solid #999; border-left: 1px solid #999; }
.term-body { flex: 1; min-height: 0; display: flex; background: #fff; overflow: hidden; }
.articles { flex: 1; border-collapse: collapse; table-layout: fixed; height: 0; }
.articles th, .articles td { height: 16px; padding: 0 3px; text-align: left; font-weight: 400; line-height: 16px; overflow: hidden; }
.articles th { height: 17px; border-right: 1px solid #e0e0e0; line-height: 17px; }
.articles .cat { width: 286px; }
.articles .date { width: 64px; text-align: right; }
.articles .alt { background: #ebebeb; }
.articles svg { width: 7px; height: 9px; margin: 0 7px 0 0; vertical-align: -1px; }
.sort { display: inline-block; margin-left: 6px; border: 2px solid transparent; border-top: 3px solid #999; border-bottom: 0; vertical-align: 2px; }
.term-scroll { width: 14px; padding: 13px 5px 0; }
.term-scroll span { display: block; width: 3px; height: 15px; border-radius: 2px; background: #8d8d8d; }
.term-tabs { display: flex; height: 18px; border-top: 1px solid #777; color: #8d8d8d; }
.term-tabs button { height: 12px; margin-top: 2px; padding: 0 8px; border-right: 1px solid #a5a5a5; line-height: 12px; }
.term-tabs .last { border-right: 0; }
.term-tabs .active { height: 16px; margin: 0; background: #fff; color: #222; border: 1px solid #555; border-top: 0; line-height: 14px; }
.term-tabs sub { margin-left: 2px; color: #f02020; font-size: 8px; line-height: 8px; vertical-align: -3px; }

.dialog { position: absolute; left: 116px; top: 85px; width: 319px; border: 1px solid #b5b5b5; border-radius: 6px; overflow: hidden; background: #f0f0f0; box-shadow: 0 7px 20px rgba(0, 0, 0, .55), 0 1px 4px rgba(0, 0, 0, .3); }
.dialog-head { display: flex; align-items: center; height: 23px; padding-left: 5px; background: #f3f3f3; color: #959595; }
.dialog-head h2 { flex: 1; }
.dialog-head button { width: 37px; height: 20px; font-size: 11px; line-height: 20px; }
.dialog-head svg { width: 9px; height: 9px; fill: none; stroke: #999; }
.dialog-body { display: grid; grid-template-columns: 97px 1fr; column-gap: 5px; align-items: center; grid-template-rows: 43px 15px 15px 15px 12px; row-gap: 7px; margin: 0 7px 0 5px; padding: 0 0 4px; border-bottom: 1px solid #ccc; }
.dialog-body > label { text-align: right; }
.dialog-body, .dialog-foot { font-size: 8px; line-height: 13px; }
.keys { grid-area: 1 / 1; width: 36px; height: 38px; margin: 12px 0 0 7px; align-self: start; }
.lead { grid-area: 1 / 1 / 2 / 3; margin-left: 60px; padding-top: 5px; }
.field { appearance: none; width: 103px; height: 15px; padding: 0 3px; border: 1px solid #adadad; border-radius: 0; background: #fff; font: inherit; color: #222; }
select.field { background: url("data:image/svg+xml,%3Csvg xmlns='http://www.w3.org/2000/svg' viewBox='0 0 8 8'%3E%3Cpath d='M1 2l3 3 3-3' fill='none' stroke='%23888'/%3E%3C/svg%3E") right 3px center / 8px 8px no-repeat #fff; }
input.field { border-color: #e6e6e6; border-bottom-color: #b5b5b5; }
.field.long { width: 199px; }
.save { grid-column: 2; display: flex; align-items: center; gap: 2px; }
.save input { appearance: none; width: 11px; height: 11px; margin: 0; border-radius: 2px; background: url("data:image/svg+xml,%3Csvg xmlns='http://www.w3.org/2000/svg' viewBox='0 0 11 11'%3E%3Cpath d='M3 5.500l2 2 3.500-3.500' fill='none' stroke='white'/%3E%3C/svg%3E") #0f62b8; }
.dialog-foot { display: flex; gap: 7px; padding: 8px 0 7px 90px; }
.dialog-foot button { width: 65px; height: 17px; border: 1px solid #dcdcdc; border-bottom-color: #c6c6c6; border-radius: 2px; background: #fdfdfd; }
```

FILE: charts.js
```js
const NS = "http://www.w3.org/2000/svg";

const SPRING = ["24 Mar 2021", "31 Mar 11:00", "7 Apr 19:00", "15 Apr 03:00", "22 Apr 11:00", "29 Apr 19:00"];
const APRIL = ["15 Apr 2021", "19 Apr 19:00", "22 Apr 11:00", "27 Apr 03:00", "29 Apr 19:00", "4 May 11:00"];

/* Each bar key: x, high, low. Each candle: high, body top, body bottom, low, filled. */
const charts = {
  eurusd: {
    title: "EURUSD,H4  1.2061 1.2065 1.2059 1.2063", times: APRIL,
    levels: [[32, "1.2125"], [69, "1.2070"], [105, "1.2015"], [142, "1.1960"]], bid: [73, "1.2063"],
    candles: [[3, 121, 123, 135, 136, 1], [7, 123, 126, 134, 135, 0], [329, 70, 72, 79, 81, 1], [332, 71, 72, 79, 80, 1], [336, 77, 79, 88, 91, 1], [341, 87, 88, 113, 114, 1], [345, 94, 98, 113, 116, 0], [349, 91, 98, 104, 115, 1], [354, 99, 103, 106, 109, 1], [358, 101, 102, 107, 108, 0], [362, 97, 100, 102, 104, 0], [366, 100, 100, 118, 125, 1], [371, 101, 116, 118, 120, 1], [375, 108, 117, 120, 121, 1], [379, 106, 112, 120, 122, 0], [383, 106, 113, 115, 117, 1], [388, 106, 113, 115, 120, 1], [392, 86, 88, 114, 114, 0], [396, 74, 77, 88, 92, 0], [400, 68, 74, 77, 83, 0], [405, 68, 72, 74, 76, 1]],
    averages: ["2,150 9,145", "329,70 336,76 345,87 354,93 370,95 383,102 391,107 398,105 405,101"]
  },
  gbpusd: {
    title: "GBPUSD,H4  1.3900 1.3900 1.3887 1.3891", times: SPRING,
    levels: [[34, "1.3955"], [71, "1.3870"], [106, "1.3790"], [142, "1.3705"]], bid: [62, "1.3891"], bidWidth: 2,
    bars: [3,128,145, 5,130,155, 8,131,143, 11,140,154, 14,139,153, 18,143,157, 21,130,146, 24,126,142, 28,116,131, 30,115,134, 33,105,123, 35,96,108, 38,100,111, 41,103,116, 44,85,110, 45,81,100, 48,85,116, 51,109,121, 54,108,118, 58,110,130, 61,116,141, 64,120,136, 68,123,138, 70,106,136, 73,96,116, 76,96,108, 79,106,116, 83,98,125, 86,86,105, 89,85,96, 92,80,90, 94,79,90, 98,85,96, 101,86,95, 105,84,96, 108,71,93, 110,66,80, 113,52,69, 116,52,63, 118,55,68, 120,50,85, 123,76,90, 126,81,100, 129,87,95, 133,86,95, 135,86,121, 138,116,133, 141,125,133, 144,116,130, 147,108,136, 150,115,136, 154,123,135, 157,123,136, 159,130,158, 163,128,141, 166,131,145, 169,136,150, 171,140,158, 174,111,135, 178,116,131, 181,116,131, 184,115,131, 187,116,136, 189,120,147, 193,116,126, 195,110,125, 198,97,120, 201,101,121, 205,101,116, 208,106,116, 212,97,118, 216,103,115, 219,108,120, 223,111,138, 226,93,116, 229,83,100, 233,83,96, 235,70,93, 238,30,83, 240,18,46, 244,18,26, 248,10,25, 251,18,36, 254,26,48, 257,37,46, 260,38,53, 263,38,55, 266,40,65, 269,40,50, 273,36,48, 276,45,70, 278,56,88, 281,81,90, 284,75,88, 287,63,81, 289,60,75, 292,60,86, 295,60,78, 298,53,73, 300,46,66, 303,55,71, 307,51,66, 310,53,65, 313,56,76, 316,50,73, 319,50,65, 322,56,73, 325,60,73, 328,60,75, 331,48,73, 333,33,53, 336,25,41, 340,30,45, 343,29,45, 346,35,41, 349,32,41, 352,36,56, 354,46,81, 356,61,99, 359,86,101, 362,85,96, 364,76,101, 367,61,86, 369,45,70, 372,50,61, 375,53,66, 378,60,76, 380,68,86, 383,58,80, 386,56,65, 389,51,61, 392,47,76, 395,51,60, 399,53,60, 402,53,60, 405,40,77, 407,55,73, 409,58,64],
    averages: ["2,99 9,111 18,130 22,135 27,137 31,136 36,130 44,116 49,110 57,108 62,112 68,116 78,118 86,116 94,105 103,96 108,93 113,82 118,76 124,76 133,77 141,90 149,106 159,120 168,130 173,132 191,131 201,121 218,113 229,108 236,101 243,81 251,56 259,40 263,36 266,35 269,36 273,39 279,51 289,61 304,70 318,62 331,62 341,53 348,48 353,46 361,52 368,61 376,66 381,74 388,70 394,62 409,61"]
  },
  usdchf: {
    title: "USDCHF,H4  0.9076 0.9087 0.9073 0.9083", times: SPRING, split: true,
    levels: [[19, "0.9430"], [54, "0.9285"], [88, "0.9140"]], bid: [102, "0.9083"],
    mids: [2,40, 5,36, 8,37, 13,37, 21,36, 23,27, 26,27, 31,26, 35,27, 38,28, 43,27, 48,29, 53,28, 56,24, 61,21, 65,20, 70,18, 75,18, 79,15, 83,13, 85,14, 87,22, 91,22, 96,22, 101,19, 108,19, 110,24, 112,34, 116,34, 120,31, 122,34, 125,42, 127,47, 133,50, 137,54, 143,52, 146,54, 149,61, 151,65, 156,64, 160,59, 163,59, 166,61, 171,61, 175,67, 178,69, 181,66, 185,63, 190,71, 193,73, 198,73, 200,68, 206,67, 211,67, 215,66, 218,69, 222,71, 225,76, 230,75, 235,73, 237,86, 240,88, 246,87, 251,85, 256,83, 263,80, 266,81, 273,83, 280,81, 286,83, 293,87, 300,91, 305,87, 311,86, 316,91, 323,86, 328,86, 331,91, 334,99, 340,100, 346,102, 351,101, 356,91, 366,90, 371,94, 376,89, 383,89, 390,90, 396,90, 402,90, 405,99, 410,102],
    macd: [2,122, 6,119, 13,116, 26,116, 43,117, 60,120, 81,118, 88,121, 95,126, 101,128, 110,131, 115,135, 121,140, 130,149, 138,155, 146,156, 155,158, 163,156, 171,151, 180,151, 188,148, 196,150, 203,147, 210,143, 216,140, 223,139, 235,142, 243,148, 251,149, 260,145, 270,140, 280,137, 290,137, 300,141, 310,139, 326,135, 336,140, 346,145, 355,142, 363,136, 373,133, 390,131, 403,132, 410,138],
    signal: "2,131 10,121 18,117 30,116 53,118 86,118 100,122 110,127 121,134 133,146 145,153 155,157 165,157 180,152 200,150 213,147 223,141 233,141 251,148 260,148 275,142 290,137 310,140 330,137 346,142 355,145 363,142 380,134 393,131 410,131",
    lower: "MACD(12,26,9) -0.00081 0.00002", lowerLevels: [[115, "0.00327", 0], [132, "0.00", 1], [157, "-0.00415", 0]]
  },
  usdjpy: {
    title: "USDJPY,H4  109.22 109.25 109.09 109.09", times: APRIL, split: true,
    levels: [[17, "109.55"], [53, "108.70"], [88, "107.85"]], bid: [36, "109.09"],
    series: [207,215,217,225,1, 207,212,228,237,1, 215,224,228,236,0, 222,224,238,248,1, 228,230,236,238,0, 226,228,232,248,0, 205,225,229,230,0, 203,215,222,235,0, 210,214,216,232,1, 210,215,228,232,1, 222,225,228,232,1, 222,226,234,244,1, 226,236,240,255,1, 238,240,316,320,1, 310,313,316,325,1, 286,313,316,325,1, 302,307,316,318,0, 300,302,308,330,0, 284,300,304,310,1, 256,264,304,308,0, 258,264,266,282,1, 262,267,310,320,1, 305,308,311,318,1, 305,312,314,342,1, 312,314,319,345,1, 290,298,319,332,0, 296,298,319,324,1, 300,313,319,326,0, 308,312,316,322,1, 308,315,320,322,1, 316,322,330,334,1, 312,320,332,350,0, 297,310,320,330,0, 295,298,304,318,0, 296,300,328,334,1, 325,330,342,345,1, 332,336,342,346,0, 330,335,338,342,1, 332,336,386,392,1, 308,328,388,390,0, 322,328,340,346,1, 330,332,338,348,1, 338,340,360,370,1, 345,358,362,368,1, 303,316,362,364,0, 300,310,316,325,0, 304,308,312,316,1, 306,310,314,316,0, 280,298,310,315,0, 274,280,298,302,0, 270,282,288,295,1, 237,240,290,292,0, 226,238,242,245,0, 208,208,238,242,0, 205,208,218,222,1, 188,210,216,222,0, 200,203,208,222,0, 202,203,216,238,1, 200,215,250,252,1, 245,250,270,272,1, 240,254,270,272,0, 198,202,254,256,0, 188,203,208,220,1, 170,208,212,224,1, 200,208,212,215,0, 192,206,208,218,1, 206,208,224,236,1, 210,210,224,230,0, 198,202,210,228,0, 155,160,202,215,0, 155,156,160,165,0, 145,155,162,168,0, 125,125,155,162,0, 112,118,125,130,0, 117,118,152,162,1, 150,154,182,212,1, 180,183,187,192,1, 178,185,190,192,0, 155,163,186,188,0, 138,145,163,168,0, 143,145,186,192,1, 145,162,186,194,0, 153,158,162,164,0, 148,156,160,163,0, 153,157,160,175,0, 138,154,157,168,1, 148,154,157,165,1, 152,160,163,170,1, 158,160,176,180,1, 160,162,175,178,0, 145,148,162,170,0, 146,148,172,175,1, 160,162,171,190,0, 147,160,183,190,1, 168,170,188,190,1],
    cci: [35,487, 50,490, 62,492, 75,502, 98,498, 112,470, 124,464, 136,472, 150,475, 162,477, 176,492, 190,505, 203,556, 216,535, 228,512, 240,500, 265,486, 280,472, 290,468, 305,480, 320,487, 345,490, 357,478, 370,482, 395,482, 420,495, 433,492, 447,470, 460,461, 472,475, 485,516, 497,512, 511,497, 523,532, 535,490, 548,478, 562,480, 575,498, 588,498, 600,460, 612,440, 625,437, 640,430, 653,423, 665,428, 678,435, 690,425, 705,421, 720,427, 750,437, 775,452, 793,470, 805,470, 820,450, 845,443, 855,450, 870,450, 883,469, 908,452, 921,420, 933,414, 947,422, 973,425, 985,437, 998,465, 1012,472, 1025,470, 1037,463, 1049,450, 1062,469, 1100,463, 1115,467, 1127,457, 1150,462, 1165,472, 1177,466, 1190,438, 1203,472, 1217,490, 1230,497, 1241,512],
    lower: "CCI(14) -173.5043", lowerLevels: [[115, "226.1446", 0], [121, "100", 1], [130, "0.00", 1], [138, "-100", 1], [157, "-365.4888", 0]]
  }
};

function add(svg, name, attrs, text) {
  const el = document.createElementNS(NS, name);
  for (const key in attrs) el.setAttribute(key, attrs[key]);
  if (text) el.textContent = text;
  svg.appendChild(el);
}

function stroke(svg, d, color, extra) {
  add(svg, "path", { d, stroke: color, fill: "none", ...extra });
}

function groups(list, size) {
  const out = [];
  for (let i = 0; i < list.length; i += size) out.push(list.slice(i, i + size));
  return out;
}

/* Linear interpolation of every column at position x. */
function sample(keys, x) {
  let i = 1;
  while (i < keys.length - 1 && keys[i][0] < x) i++;
  const a = keys[i - 1], b = keys[i];
  const t = Math.max(0, Math.min(1, (x - a[0]) / (b[0] - a[0])));
  return a.map((v, k) => v + (b[k] - v) * t);
}

function drawCandles(svg, candles) {
  for (const [x, hi, top, bottom, lo, filled] of candles) {
    stroke(svg, `M${x} ${hi}V${top}M${x} ${bottom}V${lo}`, "#00c800");
    add(svg, "rect", { x: x - 1.4, y: top, width: 2.8, height: Math.max(bottom - top, 1), fill: filled ? "#f2fff2" : "#000", stroke: "#00c800", "stroke-width": 0.8 });
  }
}

function draw(svg, c) {
  const bottom = 162;
  const xs = [37, 71, 105, 140, 174, 208, 243, 277, 311, 345, 380, 414];
  const ys = c.levels.map(l => l[0]).concat((c.lowerLevels || []).filter(l => l[2]).map(l => l[0]));
  const grid = xs.map(x => `M${x}.5 2V${bottom}`).concat(ys.map(y => `M3 ${y}.5H415`)).join("");
  stroke(svg, grid, "#56626e", { "stroke-dasharray": "3 2" });
  stroke(svg, `M3 ${c.bid[0]}.5H415`, c.bidWidth ? "#3a4248" : "#5c6875", { "stroke-width": c.bidWidth || 1 });

  if (c.bars) {
    const keys = groups(c.bars, 3);
    let d = "";
    for (let x = 3, n = 0; x < 410; x += 2.58, n++) {
      const [, hi, lo] = sample(keys, x);
      const open = hi + (lo - hi) * ((n * 7 % 5) / 5 * 0.5 + 0.2), close = hi + (lo - hi) * ((n * 3 % 7) / 7 * 0.5 + 0.3);
      d += `M${x} ${hi}V${lo}M${x - 1.3} ${open}H${x}M${x} ${close}H${x + 1.3}`;
    }
    stroke(svg, d, "#00a400");
  }
  if (c.mids) {
    const keys = groups(c.mids, 2);
    let d = "", last = keys[0][1];
    for (let x = 3, n = 0; x < 411; x += 2.58, n++) {
      const y = sample(keys, x)[1], up = 1 + n * 5 % 4, dn = 1 + n * 3 % 4;
      d += `M${x} ${Math.min(last, y) - up}V${Math.max(last, y) + dn}M${x - 1.3} ${last}H${x}M${x} ${y}H${x + 1.3}`;
      last = y;
    }
    stroke(svg, d, "#00b400");
  }
  if (c.candles) drawCandles(svg, c.candles);
  if (c.series) drawCandles(svg, groups(c.series, 5).map((k, i) => [3.3 + i * 4.27, ...k.slice(0, 4).map(v => v / 3 - 26), k[4]]));
  for (const points of c.averages || []) add(svg, "polyline", { points, fill: "none", stroke: "#a80000", "stroke-linejoin": "round" });

  if (c.macd) {
    const keys = groups(c.macd, 2);
    let d = "";
    for (let x = 3; x < 411; x += 2.58) d += `M${x} 132V${sample(keys, x)[1]}`;
    stroke(svg, d, "#9a9a9a");
    add(svg, "polyline", { points: c.signal, fill: "none", stroke: "#c81414", "stroke-dasharray": "2 1.500" });
  }
  if (c.cci) add(svg, "polyline", { points: groups(c.cci, 2).map(([x, y]) => `${x / 3 - 9},${y / 3 - 26}`).join(" "), fill: "none", stroke: "#1c7f7c" });

  stroke(svg, `M2.500 ${bottom}V1.500H415.500V${bottom}M2 ${bottom - 0.5}H416`, "#b4b4b4");
  if (c.split) {
    add(svg, "rect", { x: 0, y: 108, width: 416, height: 2, fill: "#a8a8a8" });
    add(svg, "text", { x: 4, y: 119, class: "label" }, c.lower);
    for (const [y, text] of c.lowerLevels) add(svg, "text", { x: 417, y: y + 3, class: "label" }, text);
  }
  add(svg, "text", { x: 4, y: 11, class: "label", style: "white-space:pre" }, c.title);
  for (const [y, text] of c.levels) {
    stroke(svg, `M415 ${y}.5h3`, "#b4b4b4");
    add(svg, "text", { x: 419, y: y + 3, class: "label" }, text);
  }
  add(svg, "rect", { x: 416, y: c.bid[0] - 5, width: 29, height: 10, fill: "#fff" });
  add(svg, "text", { x: 419, y: c.bid[0] + 3, class: "tag" }, c.bid[1]);
  c.times.forEach((text, i) => {
    const x = 2 + Math.round(i * 68.6);
    stroke(svg, `M${x}.5 162v2`, "#b4b4b4");
    add(svg, "text", { x, y: 172, class: "label" }, text);
  });
}

document.querySelectorAll("[data-chart]").forEach(svg => draw(svg, charts[svg.dataset.chart]));

const glyphs = [
  ["最小化", '<path d="M1 3.500h9v3H1z" fill="#fff" stroke="#7f8790"/>'],
  ["最大化", '<path d="M1 .5h9v8H1z" fill="#fff" stroke="#7f8790"/><path d="M3.500 3h4v3h-4z" fill="#c6d4e2" stroke="#7f8790"/>'],
  ["閉じる", '<path d="M2 1l7 7M9 1L2 8" stroke="#7f8790" stroke-width="3.600"/><path d="M2.500 1.500l6 6M8.500 1.500l-6 6" stroke="#fff" stroke-width="1.600"/>']
];
document.querySelectorAll(".win-buttons").forEach(box => {
  box.innerHTML = glyphs.map(([label, shape]) => `<button aria-label="${label}"><svg viewBox="0 0 11 9">${shape}</svg></button>`).join("");
});
```
